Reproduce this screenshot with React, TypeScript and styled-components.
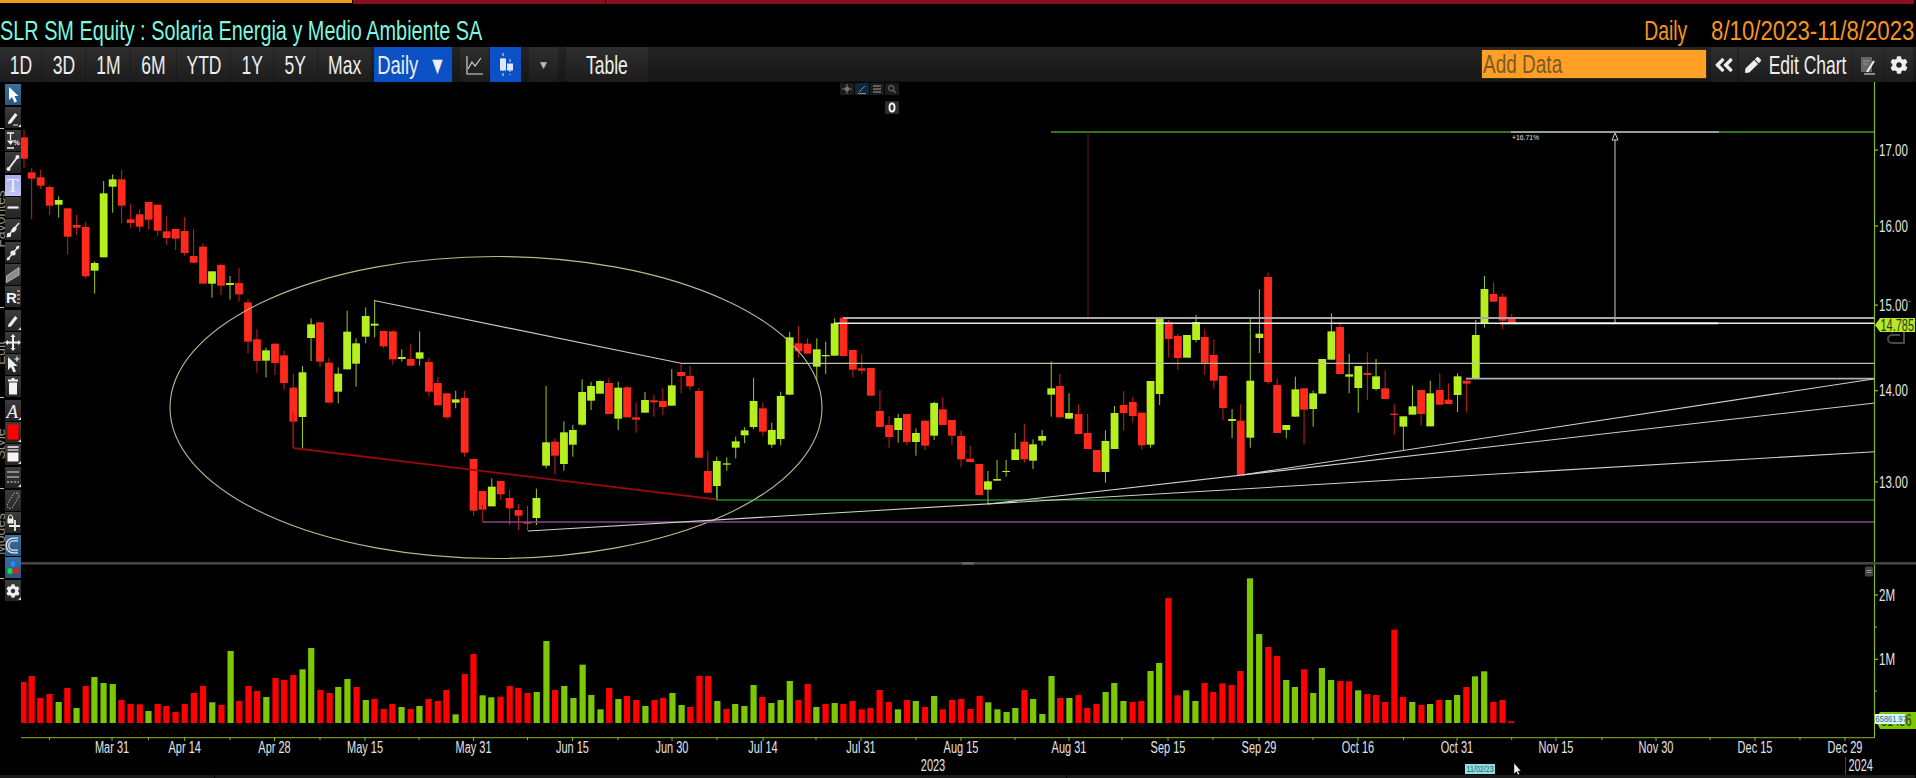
import React from "react";
import styled, { createGlobalStyle } from "styled-components";
import { FaCog, FaPen, FaAngleDoubleLeft, FaSearch } from "react-icons/fa";

const NARROW = `"Liberation Sans", Arial, sans-serif`;

const Global = createGlobalStyle`
  html, body { margin: 0; padding: 0; background: #000; overflow: hidden; }
  #root { width: 1916px; height: 778px; }
`;

const Page = styled.div`
  width: 1916px;
  height: 778px;
  display: flex;
  flex-direction: column;
  background: #000;
  font-family: ${NARROW};
  overflow: hidden;
`;

const TopStrip = styled.div`
  display: flex;
  height: 4px;
  flex: none;
`;
const StripOrange = styled.div`
  width: 352px;
  height: 2.5px;
  background: #f39a1e;
`;
const StripRed = styled.div<{ $w: number }>`
  width: ${(p) => p.$w}px;
  margin-left: 1px;
  background: #8a1020;
`;

const TitleRow = styled.div`
  height: 43px;
  flex: none;
  box-sizing: border-box;
  display: flex;
  align-items: flex-end;
  justify-content: space-between;
  padding: 0 2px 1px 0;
  overflow: hidden;
`;
const Title = styled.div`
  font-size: 28px;
  line-height: 30px;
  color: #7ff7de;
  white-space: nowrap;
  transform: scaleX(0.709);
  transform-origin: left center;
`;
const RangeInfo = styled.div`
  display: flex;
  font-size: 28px;
  line-height: 30px;
  color: #f7941e;
  white-space: nowrap;
`;
const RangeText = styled.span<{ $sx: number; $mr?: number }>`
  display: block;
  margin-right: ${(p) => p.$mr ?? 0}px;
  transform: scaleX(${(p) => p.$sx});
  transform-origin: right center;
`;

const Toolbar = styled.div`
  height: 35px;
  flex: none;
  box-sizing: border-box;
  padding-right: 3px;
  display: flex;
  align-items: stretch;
  background: linear-gradient(#242424, #161616);
`;
const Btn = styled.div<{ $w: number; $on?: boolean; $ml?: number; $pl?: number; $pr?: number }>`
  width: ${(p) => p.$w}px;
  margin-left: ${(p) => p.$ml ?? 1}px;
  padding-left: ${(p) => p.$pl ?? 0}px;
  padding-right: ${(p) => p.$pr ?? 0}px;
  box-sizing: border-box;
  flex: none;
  display: flex;
  align-items: center;
  justify-content: center;
  color: #eee;
  background: ${(p) =>
    p.$on ? "#0b50c4" : "linear-gradient(#2e2e2e, #1c1c1c)"};
  & > svg {
    flex: none;
  }
`;
const BtnText = styled.span<{ $sx?: number; $left?: boolean; $ml?: number }>`
  display: inline-block;
  flex: none;
  margin-left: ${(p) => p.$ml ?? 0}px;
  font-size: 25px;
  line-height: 30px;
  white-space: nowrap;
  transform: scaleX(${(p) => p.$sx ?? 0.7});
  transform-origin: ${(p) => (p.$left ? "left" : "center")} center;
`;
const Caret = styled.span`
  font-size: 9px;
  color: #bbb;
  font-family: "DejaVu Sans", sans-serif;
`;
const AddData = styled.div`
  margin-left: auto;
  margin-top: 2px;
  margin-bottom: 3px;
  width: 226px;
  flex: none;
  box-sizing: border-box;
  border: 1px solid #3a2a10;
  background: #ff9f28;
  color: #7a5a24;
  padding-left: 1px;
  display: flex;
  align-items: center;
  overflow: hidden;
`;

const Workspace = styled.div`
  flex: 1;
  display: flex;
  min-height: 0;
`;
const Rail = styled.div`
  width: 21px;
  flex: none;
  display: flex;
  flex-direction: column;
`;
const RailGroup = styled.div<{ $first?: boolean }>`
  display: flex;
  flex: none;
  border-top: 1px solid ${(p) => (p.$first ? "transparent" : "#bbb")};
  border-image: ${(p) =>
      p.$first
        ? "linear-gradient(transparent, transparent)"
        : "linear-gradient(to right, #bbb 5px, transparent 5px)"}
    1;
  padding-top: 1.4px;
`;
const RailLabel = styled.div`
  width: 5px;
  flex: none;
  overflow: hidden;
  display: flex;
  align-items: center;
  justify-content: center;
`;
const RailLabelText = styled.span`
  display: block;
  flex: none;
  font-size: 14px;
  color: #8e8e8e;
  white-space: nowrap;
  transform: rotate(-90deg) translateY(-2.5px);
`;
const RailCol = styled.div`
  width: 16px;
  display: flex;
  flex-direction: column;
  gap: 1.3px;
`;
const Tool = styled.div<{ $bg?: string }>`
  width: 16px;
  height: 21px;
  background: ${(p) => p.$bg ?? "linear-gradient(#3c3c3c, #242424)"};
  display: flex;
  align-items: center;
  justify-content: center;
  color: #eee;
  position: relative;
`;
const ToolCorner = styled.span`
  position: absolute;
  right: 0;
  bottom: 1px;
  width: 0;
  height: 0;
  border-left: 3px solid transparent;
  border-bottom: 3px solid #ddd;
`;

const ChartArea = styled.div`
  flex: 1;
  position: relative;
  min-width: 0;
`;
const ChartSvg = styled.svg`
  display: block;
  width: 100%;
  height: 100%;
`;
const FloatBar = styled.div`
  position: absolute;
  left: 819px;
  top: 1px;
  display: grid;
  grid-template-columns: repeat(4, 14px);
  gap: 1px;
`;
const FloatTile = styled.div<{ $on?: boolean; $col?: number }>`
  height: 12px;
  grid-column: ${(p) => p.$col ?? "auto"};
  background: ${(p) => (p.$on ? "#10283c" : "#1b1b1b")};
  display: flex;
  align-items: center;
  justify-content: center;
  color: #666;
`;
const FloatZero = styled(FloatTile)`
  margin-top: 5px;
  height: 13px;
  background: #2c2c2c;
  color: #eee;
`;

const Footer = styled.div`
  height: 3px;
  flex: none;
  display: flex;
  background: #1a1a1a;
`;
const FooterCell = styled.div<{ $w?: number }>`
  flex: ${(p) => (p.$w ? `0 0 ${p.$w}px` : "1")};
  border-right: 1px solid #000;
`;

const AxisText = styled.text<{ $size?: number; $fill?: string }>`
  font-family: ${NARROW};
  font-size: ${(p) => p.$size ?? 13.4}px;
  fill: ${(p) => p.$fill ?? "#e4e4e4"};
`;

type C = number[];
const z3: C[] = [
  [72,150,172,236,264,0],[95,265,277,296,418,0],[122,270,292,317,328,0],[149,316,321,377,405,0],[176,349,360,374,413,1],[203,385,385,470,524,0],[230,405,435,443,465,0],[257,426,441,589,595,0],[284,544,549,572,641,1],[311,303,340,532,532,1],[338,283,298,320,398,1],[365,270,298,377,430,0],[392,372,418,429,445,0],[419,388,403,440,455,0],[446,366,366,419,448,0],[473,374,374,452,468,0],[500,409,454,474,495,0],[527,447,447,476,510,0],[554,411,453,519,527,0],[581,447,528,548,550,0],[609,490,500,611,611,0],[636,574,574,611,653,1],[663,550,555,617,645,0],[690,588,609,615,659,1],[717,564,609,643,665,0],[744,657,667,785,821,0],[771,748,778,843,878,0],[798,803,811,842,892,1],[825,791,791,849,885,0],[852,812,826,909,930,0],[880,882,923,1025,1105,0],
];
const z5: C[] = [
  [7,318,337,471,565,1],[31,175,193,234,303,1],[56,187,187,305,322,0],[81,293,308,428,428,0],[107,322,341,395,430,1],[132,152,215,328,328,1],[157,235,250,311,380,1],[184,142,168,230,250,1],[209,122,191,197,232,1],[234,213,213,259,265,0],[260,211,214,298,314,0],[285,268,291,297,305,1],[310,252,297,317,317,0],[335,214,277,296,317,1],[361,293,306,395,410,0],[386,350,369,436,436,0],[411,400,400,472,478,0],[436,392,418,428,445,1],[461,392,414,578,590,0],[486,597,597,752,767,0],[511,693,693,749,786,0],[537,655,680,739,739,1],[562,663,663,703,720,0],[587,690,714,745,795,0],[612,732,750,767,810,0],[637,737,786,791,812,0],[662,686,714,774,795,1],[689,378,547,617,625,1],[714,535,545,587,643,0],[739,484,517,612,632,1],[764,495,510,554,590,1],[790,358,396,494,497,1],[815,365,378,422,450,1],[840,361,363,401,401,1],[865,355,369,462,462,0],[891,365,383,476,510,1],[916,378,382,472,472,0],[941,427,472,479,518,0],[966,396,420,458,458,1],[991,405,421,427,470,0],[1016,385,423,441,465,0],[1041,327,376,437,437,1],[1067,310,336,348,400,0],[1092,318,348,379,390,0],[1117,383,393,593,593,0],[1142,573,633,698,698,0],[1167,590,603,678,720,1],[1195,592,610,614,632,1],[1220,530,544,563,595,1],[1245,502,511,526,550,1],[1270,354,423,501,507,1],[1296,428,445,515,528,0],[1321,488,510,554,563,1],[1346,395,408,537,556,1],[1371,216,232,404,404,1],[1396,198,250,274,293,0],[1421,235,251,281,281,0],[1447,235,268,320,360,1],[1472,245,285,289,342,1],[1497,175,190,287,287,1],[1522,173,173,288,288,0],[1548,270,270,329,352,0],
];
const z6: C[] = [
  [4,282,325,332,342,0],[25,324,324,407,407,0],[46,390,453,501,501,0],[67,468,495,531,563,0],[88,462,474,510,548,1],[108,462,462,546,556,0],[129,505,519,546,587,1],[150,482,482,557,570,0],[171,425,429,527,540,1],[191,412,448,495,495,0],[212,480,480,527,556,0],[233,512,528,598,621,0],[254,558,596,606,606,0],[275,612,612,705,705,0],[295,633,664,689,733,1],[316,600,657,662,662,1],[337,600,633,636,650,1],[358,519,568,600,600,1],[379,492,545,598,608,0],[399,538,553,602,627,1],[420,510,528,542,556,1],[441,304,385,404,470,1],[461,342,378,472,472,0],[482,400,459,476,476,1],[504,433,462,522,522,0],[525,461,519,567,567,0],[546,570,570,636,636,0],[566,511,543,636,668,1],[587,438,459,567,567,1],[608,393,435,459,512,0],[629,411,426,468,488,0],[650,458,458,556,569,0],[670,363,363,554,563,1],[691,175,175,402,435,1],[712,180,187,237,292,0],[733,221,228,294,330,0],[754,225,225,293,293,1],[775,165,186,240,247,1],[795,208,231,308,345,0],[816,238,285,362,386,0],[837,348,348,444,480,0],[858,447,477,483,535,1],[878,433,482,645,645,0],[900,176,362,533,563,1],[921,88,221,234,279,1],[941,37,51,366,372,0],[962,355,375,519,519,0],[983,495,495,510,535,1],[1004,350,388,470,470,1],[1024,385,385,449,553,0],[1045,391,400,447,500,1],[1066,297,297,401,401,1],[1087,160,214,299,299,1],[1107,187,201,342,342,0],[1128,282,343,350,400,1],[1149,318,318,384,458,1],[1170,277,339,345,420,0],[1190,297,349,387,392,1],[1211,331,385,417,417,0],[1232,433,461,465,524,0],[1253,469,469,500,570,1],[1274,376,439,464,464,1],[1294,390,390,462,497,0],[1315,362,400,499,499,1],[1337,340,390,434,434,0],[1357,370,419,432,432,0],[1378,340,349,405,456,1],[1399,362,362,371,458,0],[1420,180,225,357,357,1],[1440,48,87,190,203,1],[1461,67,102,125,125,0],[1482,100,110,182,207,0],[1503,162,175,188,188,0],
];
const conv = (list: C[], ox: number, sx: number, oy: number) =>
  list.map(([x, h, t, b, l, g]) => ({
    x: ox + x / sx,
    hi: oy + h / 3,
    top: oy + t / 3,
    bot: oy + b / 3,
    lo: oy + l / 3,
    g: !!g,
  }));
const candles = [
  ...conv(z3, 0, 3, 80),
  ...conv(z5, 300, 2.8, 260),
  ...conv(z6, 860, 2.306, 260),
];

const parseVol = (s: string, ox: number) =>
  s.split(",").map((e) => {
    const [x, t, g] = e.trim().split(" ");
    return { x: ox + Number(x) / 1.96, top: 580 + Number(t) / 3, g: g === "g" };
  });
const volumes = [
  ...parseVol(
    "46 306,62 288,79 354,97 342,115 366 g,132 324,150 384 g,168 318,185 291 g,203 309 g,221 312 g,238 360,256 372,274 373,291 393 g,309 372,326 378,344 396,362 372,380 339,398 318,416 367 g,434 375,452 213 g,469 363,487 318,504 333,522 351 g,540 294,557 300,575 285,593 268 g,610 204 g,628 330,646 339,663 321 g,681 297 g,699 321,717 360 g,734 357,752 387,769 372,787 381 g,805 387,822 378 g,840 357,858 363,875 330,893 403 g,911 282,928 222,946 346 g,963 352 g,981 350,999 318,1016 324,1034 339,1052 336 g,1071 183 g,1088 330,1106 318 g,1124 354 g,1142 254 g,1159 345 g,1177 388 g,1194 324,1212 357 g,1229 348,1247 360,1265 378 g,1283 360,1300 354,1318 339 g,1336 375 g,1353 381,1371 288,1388 288,1406 363 g,1424 387,1441 372 g,1459 378 g,1477 315 g,1494 351,1512 369 g,1530 360 g,1548 303 g,1565 360",
    0,
  ),
  ...parseVol(
    "15 312,32 381 g,50 372,68 369 g,85 372,103 363,121 388,138 384,156 330,174 366,192 388 g,210 360,227 363 g,245 381,263 348 g,280 388,298 360,316 357,334 387,352 348,369 367 g,387 388 g,405 396 g,422 384 g,440 330,457 357 g,475 402 g,493 288 g,510 354,528 354 g,546 345,563 384,581 372,599 336 g,616 309 g,634 363 g,652 366,669 363,687 273 g,704 249 g,722 54,740 346,757 331 g,775 363 g,793 309,810 336,828 310,846 315,863 273,882 -5 g,900 162 g,918 201,935 228,953 300 g,970 321 g,988 268,1006 339 g,1023 264 g,1041 300 g,1059 303,1076 304,1094 331 g,1112 342,1129 345,1147 366,1165 149,1182 351,1200 366 g,1218 375,1235 372 g,1253 360,1271 360 g,1288 345 g,1306 321,1323 289 g,1341 274 g,1359 366,1377 360,1394 424",
    800,
  ),
];

const overlays: [number, number, number, number, string, number][] = [
  [1051, 132, 1874, 132, "#3f9e28", 1.3],
  [1511, 132, 1719, 132, "#b5b5b5", 1.3],
  [1088, 132, 1088, 317, "#701414", 1],
  [1615, 139, 1615, 323, "#c8c8c8", 1],
  [843, 318, 1874, 318, "#a8a8a8", 2],
  [834, 323.3, 1874, 323.3, "#e8e8e8", 1.4],
  [1500, 323.3, 1718, 323.3, "#ffffff", 1.8],
  [1466, 378.7, 1874, 378.7, "#b0b0b0", 1.8],
  [374, 300.5, 681, 363.3, "#c8c8c8", 1.1],
  [681, 363.3, 1874, 363.3, "#c0c0a8", 1.2],
  [293, 448, 717, 499.5, "#960a0a", 1.8],
  [293, 412, 293, 448, "#a01010", 1],
  [717, 486, 717, 500, "#5fd040", 1],
  [717, 500, 1874, 500, "#3cc83c", 1.2],
  [482.5, 522, 1874, 522, "#844688", 1.6],
  [482.5, 505, 482.5, 522, "#a01010", 1],
  [528, 531, 1875, 451.7, "#cfcfcf", 1.1],
  [988, 504, 1875, 403, "#cfcfcf", 1.1],
  [1241.6, 475, 1875, 378.7, "#cfcfcf", 1.1],
];

const xLabels: [string, number][] = [
  ["Mar 31", 112],["Apr 14", 184.7],["Apr 28", 274.5],["May 15", 365],["May 31", 473.5],["Jun 15", 572.5],["Jun 30", 672],["Jul 14", 763],["Jul 31", 861],["Aug 15", 961],["Aug 31", 1069],["Sep 15", 1168],["Sep 29", 1259],["Oct 16", 1358],["Oct 31", 1457],["Nov 15", 1556],["Nov 30", 1656],["Dec 15", 1755],["Dec 29", 1845],
];
const minorTicks = [49.5,148.5,230,320,419,527.5,618,717,816,916,1015,1122,1213,1313,1403.6,1511.7,1602,1710,1800];
const yLabels: [string, number][] = [["17.00",150],["16.00",226],["15.00",305],["14.00",390.7],["13.00",482],["2M",595],["1M",659.3]];

const Label = ({ x, y, children, anchor, size, sy = 1.18, sx = 0.82, fill }: {
  x: number; y: number; children: React.ReactNode; anchor?: "middle" | "start"; size?: number; sy?: number; sx?: number; fill?: string;
}) => (
  <AxisText
    $size={size}
    $fill={fill}
    textAnchor={anchor ?? "middle"}
    transform={`translate(${x} ${y}) scale(${sx} ${sy})`}
  >
    {children}
  </AxisText>
);

const Candles = () => (
  <g>
    {candles.map((c, i) => {
      const col = c.g ? "#b6ef1e" : "#ff2a1c";
      const wick = c.g ? "#9acb1c" : "#c8221a";
      return (
        <g key={i}>
          <line x1={c.x} x2={c.x} y1={c.hi} y2={c.lo} stroke={wick} strokeWidth={1} />
          <rect x={c.x - 3.9} width={7.8} y={c.top} height={c.bot - c.top} fill={col} />
        </g>
      );
    })}
  </g>
);

const Volumes = () => (
  <g>
    {volumes.map((v, i) => (
      <rect
        key={i}
        x={v.x - 3.1}
        width={6.2}
        y={v.top}
        height={723 - v.top}
        fill={v.g ? "#7dc804" : "#ff0000"}
      />
    ))}
  </g>
);

const Overlays = () => (
  <g fill="none">
    <ellipse cx={496} cy={407.5} rx={326} ry={151} stroke="#b9b98e" strokeWidth={1.1} />
    {overlays.map(([x1, y1, x2, y2, c, w], i) => (
      <line key={i} x1={x1} y1={y1} x2={x2} y2={y2} stroke={c} strokeWidth={w} />
    ))}
    <path d="M1615 133 L1612 140 L1618 140 Z" stroke="#d0d0d0" strokeWidth={1} fill="#000" />
  </g>
);

const Axes = () => (
  <g>
    <line x1={1874.5} x2={1874.5} y1={82} y2={738} stroke="#86b62a" strokeWidth={1.2} />
    <line x1={21} x2={1875} y1={737.6} y2={737.6} stroke="#6f8f28" strokeWidth={1.4} />
    <rect x={21} y={562} width={1895} height={2.6} fill="#444" />
    <rect x={962} y={562} width={12} height={2.6} fill="#666" />
    <rect x={1865} y={566.5} width={8} height={10} rx={1.5} fill="#444" />
    <path d="M1866.5 570.5h5M1866.5 572.5h5" stroke="#aaa" strokeWidth={0.8} />
    {yLabels.map(([t, y]) => (
      <g key={t}>
        <line x1={1875} x2={1878} y1={y} y2={y} stroke="#9acb1c" strokeWidth={1.2} />
        <Label x={1879} y={y + 5.5} anchor="start" sx={0.86} sy={1.3}>{t}</Label>
      </g>
    ))}
    <path d="M1875 627h2M1875 691h2" stroke="#86b62a" />
    {xLabels.map(([t, x]) => (
      <g key={t}>
        <line x1={x} x2={x} y1={737} y2={741} stroke="#86b62a" />
        <Label x={x} y={753}>{t}</Label>
      </g>
    ))}
    {minorTicks.map((x) => (
      <line key={x} x1={x} x2={x} y1={737} y2={740} stroke="#86b62a" />
    ))}
    <Label x={933} y={770.5}>2023</Label>
    <line x1={1845.5} x2={1845.5} y1={757} y2={775} stroke="#444" />
    <Label x={1848.5} y={770.5} anchor="start">2024</Label>
    <AxisText $size={6.8} $fill="#e0e0e0" x={1512} y={140}>+16.71%</AxisText>

    <path d="M1892 333a6 6 0 0 1 12 0v10h-12a4 4 0 0 1 0-8h8" fill="none" stroke="#4a4a4a" strokeWidth={2} />
    <path d="M1906 301.5h5" stroke="#555" strokeWidth={1.5} />

    <path d="M1875 325 L1880 318 H1915 V332 H1880 Z" fill="#b7e62e" />
    <Label x={1880.5} y={330.5} anchor="start" fill="#26400a" sy={1.25}>14.785</Label>

    <path d="M1875 719 L1880 712 H1916 V729 H1880 Z" fill="#7dc804" />
    <Label x={1881} y={726} anchor="start" fill="#26400a" sy={1.2}>51456</Label>
    <rect x={1875} y={714} width={30} height={10} fill="#d8f6f8" />
    <Label x={1875.5} y={722} anchor="start" size={8.4} sx={0.9} sy={1.1} fill="#2a6a8a">65861.97</Label>

    <rect x={1465} y={764} width={30} height={10} fill="#8fe0e0" />
    <Label x={1466.5} y={772} anchor="start" size={8.4} sx={0.85} sy={1.1} fill="#24607a">11/02/23</Label>
    <path d="M1514 763 L1514 774 L1516.5 771.5 L1518 775 L1519.5 774 L1518 771 L1521 771 Z" fill="#f4f4f4" stroke="#000" strokeWidth={0.4} />
  </g>
);

type IconName = "arrow"|"pen"|"range"|"line"|"T"|"dash"|"seg"|"seg2"|"channel"|"R"|"pencil"|"move"|"arrowPlus"|"trash"|"A"|"color"|"fill"|"lines"|"oval"|"lock"|"magnet"|"dots"|"gear";

const IconTxt = styled.text<{ $size: number; $it?: boolean }>`
  font-family: "Liberation Serif", serif;
  font-size: ${(p) => p.$size}px;
  font-style: ${(p) => (p.$it ? "italic" : "normal")};
  fill: #f2f2f2;
`;
const IconSans = styled(IconTxt)`
  font-family: "Liberation Sans", sans-serif;
  font-weight: 700;
`;

const Ico = ({ name }: { name: IconName }) => {
  const s = { stroke: "#eee", fill: "none" };
  let body: React.ReactNode = null;
  switch (name) {
    case "arrow":
      body = <path d="M4 3V16L7 13L9.5 18.5L12 17.5L9.5 12H13.5Z" fill="#fff" />;
      break;
    case "pen":
    case "pencil":
      body = (
        <>
          <path d="M3.5 14.5L10 6L12.5 8L6 16.5L3 17Z" fill="#eee" />
          {name === "pen" && <path d="M8 18H13" stroke="#eee" />}
        </>
      );
      break;
    case "range":
      body = (
        <>
          <path d="M2 3H9M5.5 3V10M2 18H9" {...s} strokeWidth={1.3} />
          <path d="M2 10.5H9L5.5 15Z" fill="#eee" />
          <IconSans $size={7} x={8.5} y={15}>%</IconSans>
        </>
      );
      break;
    case "line":
      body = (
        <>
          <path d="M3.5 17L12.5 5" {...s} strokeWidth={1.8} />
          <circle cx={3.5} cy={17} r={2} fill="#eee" />
          <circle cx={12.5} cy={5} r={2} fill="#eee" />
        </>
      );
      break;
    case "T":
      body = <IconTxt $size={19} x={2} y={17}>T</IconTxt>;
      break;
    case "dash":
      body = <path d="M2.5 10.5H13.5" stroke="#f4f4f4" strokeWidth={2.2} />;
      break;
    case "seg":
      body = (
        <>
          <path d="M2 18L14 4" {...s} strokeWidth={1.4} />
          <circle cx={4} cy={16} r={2.2} fill="#eee" />
          <ellipse cx={9} cy={10.5} rx={2} ry={3.2} transform="rotate(40 9 10.5)" fill="#eee" />
        </>
      );
      break;
    case "seg2":
      body = (
        <>
          <path d="M2 18L14 4" {...s} strokeWidth={1.4} />
          <circle cx={8} cy={11} r={2.6} fill="#eee" />
          <circle cx={3.5} cy={16.5} r={1.5} fill="#eee" />
          <circle cx={12.5} cy={5.5} r={1.5} fill="#eee" />
        </>
      );
      break;
    case "channel":
      body = <path d="M1.5 12L14 3.5V11L1.5 18.5Z" fill="#8c8c8c" stroke="#c8c8c8" strokeWidth={0.8} />;
      break;
    case "R":
      body = (
        <>
          <IconSans $size={15} x={1} y={16.5}>R</IconSans>
          <path d="M12 5H15M12 9H15M12 13H15M12 17H15" stroke="#eee" strokeWidth={1.2} />
        </>
      );
      break;
    case "move":
      body = (
        <path d="M8 2L10.5 5H9V9.5H13V8L16 10.5L13 13V11.5H9V16H10.5L8 19L5.5 16H7V11.5H3V13L0 10.5L3 8V9.5H7V5H5.5Z" fill="#eee" />
      );
      break;
    case "arrowPlus":
      body = (
        <>
          <path d="M3 3V16L6 13L8.5 18.5L11 17.5L8.5 12H12.5Z" fill="#eee" />
          <path d="M12 2.5V7.5M9.5 5H14.5" stroke="#eee" strokeWidth={1.2} />
        </>
      );
      break;
    case "trash":
      body = <path d="M6.5 2H9.5V3.5H13V5.5H3V3.5H6.5ZM4 6.5H12V18.5H4Z" fill="#f2f2f2" />;
      break;
    case "A":
      body = <IconTxt $size={19} $it x={1.5} y={17.5}>A</IconTxt>;
      break;
    case "color":
      body = <rect x={2.5} y={2.5} width={11} height={15} fill="#ff0000" />;
      break;
    case "fill":
      body = (
        <>
          <path d="M2.5 3H13.5" stroke="#eee" strokeWidth={1.6} />
          <path d="M2.5 6H13.5" stroke="#eee" strokeWidth={1.2} />
          <rect x={2.5} y={8.5} width={11} height={9} fill="#f4f4f4" />
        </>
      );
      break;
    case "lines":
      body = (
        <>
          <path d="M2 5H14M2 10H14" stroke="#ddd" strokeWidth={1.1} />
          <path d="M2 15H14" stroke="#ddd" strokeWidth={1.2} strokeDasharray="2.2 1.3" />
        </>
      );
      break;
    case "oval":
      body = <rect x={5} y={2} width={6} height={17} rx={3} transform="rotate(30 8 10.5)" fill="none" stroke="#aaa" strokeWidth={1} strokeDasharray="1.4 1.2" />;
      break;
    case "lock":
      body = (
        <>
          <path d="M3.5 7V5A2 2 0 0 1 7.5 5V7" {...s} strokeWidth={1} />
          <rect x={2.5} y={6.5} width={6} height={5} fill="#eee" />
          <path d="M10 8V19M4 14H15" stroke="#eee" strokeWidth={1.8} />
        </>
      );
      break;
    case "magnet":
      body = (
        <>
          <path d="M13 4.5H8.5A6 6 0 0 0 8.5 16.5H13" fill="none" stroke="#e8e8e8" strokeWidth={4} />
          <path d="M13 4.5H8.5A6 6 0 0 0 8.5 16.5H13" fill="none" stroke="#3a6a9a" strokeWidth={1.4} />
        </>
      );
      break;
    case "dots":
      body = (
        <>
          <ellipse cx={8} cy={7} rx={2.5} ry={3} fill="#2288ff" />
          <ellipse cx={5} cy={14} rx={2.6} ry={3} fill="#18e030" />
          <ellipse cx={11} cy={14} rx={2.6} ry={3} fill="#f01818" />
        </>
      );
      break;
    case "gear":
      return <FaCog size={14} />;
  }
  return (
    <svg width={16} height={21} viewBox="0 0 16 21">
      {body}
    </svg>
  );
};

const BLUE_TOOL = "linear-gradient(#3a6e9e, #2a5682)";
type ToolDef = { n: IconName; bg?: string; c?: boolean };
const groups: { label?: string; tools: ToolDef[] }[] = [
  { tools: [{ n: "arrow", bg: BLUE_TOOL }, { n: "pen", c: true }] },
  { label: "Favorites", tools: [{ n: "range" }, { n: "line" }, { n: "T", bg: "linear-gradient(#a8aef0, #c0c4f8)" }, { n: "dash" }, { n: "seg" }, { n: "seg2" }, { n: "channel" }, { n: "R" }] },
  { label: "Edit", tools: [{ n: "pencil", c: true }, { n: "move" }, { n: "arrowPlus" }, { n: "trash" }] },
  { label: "Style", tools: [{ n: "A", c: true }, { n: "color", c: true }, { n: "fill", c: true }, { n: "lines", c: true }] },
  { label: "Modes", tools: [{ n: "oval" }, { n: "lock" }, { n: "magnet", bg: BLUE_TOOL }, { n: "dots", bg: BLUE_TOOL }] },
  { tools: [{ n: "gear", c: true }] },
];

const ranges: [string, number][] = [["1D",41],["3D",43],["1M",44],["6M",45],["YTD",53],["1Y",42],["5Y",43],["Max",53]];

export default function App() {
  return (
    <Page>
      <Global />
      <TopStrip>
        <StripOrange />
        <StripRed $w={252} />
        <StripRed $w={1308} />
      </TopStrip>
      <TitleRow>
        <Title>SLR SM Equity : Solaria Energia y Medio Ambiente SA</Title>
        <RangeInfo>
          <RangeText $sx={0.69} $mr={-30}>Daily</RangeText>
          <RangeText $sx={0.793}>8/10/2023-11/8/2023</RangeText>
        </RangeInfo>
      </TitleRow>
      <Toolbar>
        {ranges.map(([t, w], i) => (
          <Btn key={t} $w={w} $ml={i === 0 ? 0 : 1}>
            <BtnText>{t}</BtnText>
          </Btn>
        ))}
        <Btn $w={78} $on $ml={3} $pr={6}>
          <BtnText $sx={0.74}>Daily</BtnText>
          <BtnText>▼</BtnText>
        </Btn>
        <Btn $w={29} $ml={8}>
          <svg width={20} height={22} viewBox="0 0 20 22" fill="none" stroke="#ddd" strokeWidth={1.1}>
            <path d="M2 2V20H18" />
            <path d="M3 15L7 8L10 12L16 4" />
          </svg>
        </Btn>
        <Btn $w={31} $on>
          <svg width={16} height={28} viewBox="0 0 16 28" stroke="#dfe8f8" fill="#dfe8f8">
            <path d="M5 2V26M12 8V24" strokeDasharray="3 2" fill="none" />
            <rect x={2.5} y={8} width={5} height={11} />
            <rect x={9.5} y={13} width={5} height={6} />
          </svg>
        </Btn>
        <Btn $w={29} $ml={8}><Caret>▼</Caret></Btn>
        <Btn $w={82} $ml={8}><BtnText>Table</BtnText></Btn>
        <AddData><BtnText $sx={0.76} $left>Add Data</BtnText></AddData>
        <Btn $w={26} $ml={4}><FaAngleDoubleLeft size={22} /></Btn>
        <Btn $w={113} $ml={2} $pl={17}>
          <FaPen size={16} />
          <BtnText $ml={-9.6}>Edit Chart</BtnText>
        </Btn>
        <Btn $w={31}>
          <svg width={18} height={22} viewBox="0 0 18 22" fill="none">
            <rect x={1} y={3} width={11} height={15} fill="#666" />
            <path d="M3 7H10M3 10H8" stroke="#999" />
            <path d="M7 18L14 7" stroke="#f2f2f2" strokeWidth={2} />
            <path d="M4 20H15" stroke="#f2f2f2" />
          </svg>
        </Btn>
        <Btn $w={28}><FaCog size={18} /></Btn>
      </Toolbar>
      <Workspace>
        <Rail>
          {groups.map((g, i) => (
            <RailGroup key={i} $first={i === 0}>
              <RailLabel>{g.label && <RailLabelText>{g.label}</RailLabelText>}</RailLabel>
              <RailCol>
                {g.tools.map((t) => (
                  <Tool key={t.n} $bg={t.bg}>
                    <Ico name={t.n} />
                    {t.c && <ToolCorner />}
                  </Tool>
                ))}
              </RailCol>
            </RailGroup>
          ))}
        </Rail>
        <ChartArea>
          <ChartSvg viewBox="21 82 1895 693" preserveAspectRatio="none">
            <Candles />
            <Volumes />
            <Overlays />
            <Axes />
          </ChartSvg>
          <FloatBar>
            <FloatTile>
              <svg width={10} height={10} viewBox="0 0 10 10" stroke="#777"><path d="M5 0V10M0 5H10" /><circle cx={5} cy={5} r={2} fill="#777" /></svg>
            </FloatTile>
            <FloatTile $on>
              <svg width={10} height={10} viewBox="0 0 10 10" stroke="#889"><path d="M2 8L8 2M1 9.5H9" /></svg>
            </FloatTile>
            <FloatTile>
              <svg width={10} height={10} viewBox="0 0 10 10" stroke="#777"><path d="M1 2H9M1 5H9M1 8H9" strokeWidth={1.5} /></svg>
            </FloatTile>
            <FloatTile><FaSearch size={8} /></FloatTile>
            <FloatZero $col={4}>
              <svg width={8} height={11} viewBox="0 0 8 11" fill="none" stroke="#f2f2f2" strokeWidth={2}><ellipse cx={4} cy={5.5} rx={2.5} ry={4} /></svg>
            </FloatZero>
          </FloatBar>
        </ChartArea>
      </Workspace>
      <Footer>
        <FooterCell $w={214} />
        <FooterCell $w={851} />
        <FooterCell />
      </Footer>
    </Page>
  );
}
